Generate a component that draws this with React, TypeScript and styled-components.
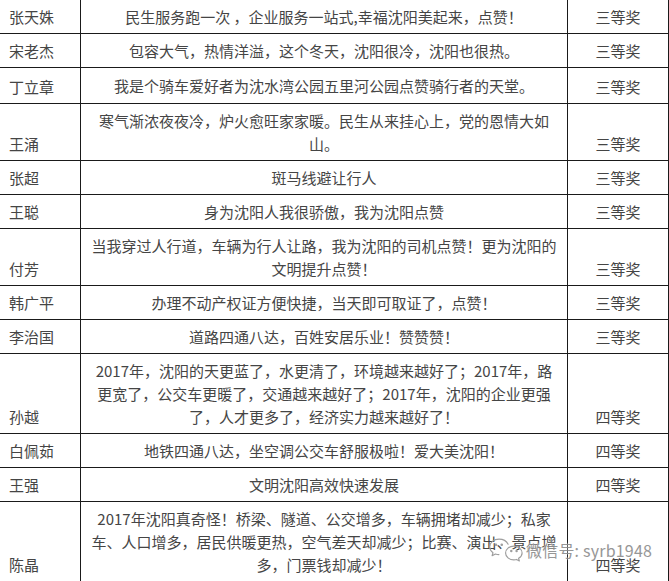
import React from "react";
import styled, { createGlobalStyle } from "styled-components";

interface Entry {
  name: string;
  lines: string[];
  prize: string;
  tall?: boolean;
}

const entries: Entry[] = [
  {
    name: "张天姝",
    lines: ["民生服务跑一次 ，企业服务一站式,幸福沈阳美起来，点赞！"],
    prize: "三等奖",
  },
  {
    name: "宋老杰",
    lines: ["包容大气，热情洋溢，这个冬天，沈阳很冷，沈阳也很热。"],
    prize: "三等奖",
  },
  {
    name: "丁立章",
    lines: ["我是个骑车爱好者为沈水湾公园五里河公园点赞骑行者的天堂。"],
    prize: "三等奖",
    tall: true,
  },
  {
    name: "王涌",
    lines: ["寒气渐浓夜夜冷，炉火愈旺家家暖。民生从来挂心上，党的恩情大如", "山。"],
    prize: "三等奖",
  },
  { name: "张超", lines: ["斑马线避让行人"], prize: "三等奖" },
  { name: "王聪", lines: ["身为沈阳人我很骄傲，我为沈阳点赞"], prize: "三等奖" },
  {
    name: "付芳",
    lines: ["当我穿过人行道，车辆为行人让路，我为沈阳的司机点赞！更为沈阳的", "文明提升点赞！"],
    prize: "三等奖",
  },
  {
    name: "韩广平",
    lines: ["办理不动产权证方便快捷，当天即可取证了，点赞！"],
    prize: "三等奖",
  },
  {
    name: "李治国",
    lines: ["道路四通八达，百姓安居乐业！赞赞赞！"],
    prize: "三等奖",
  },
  {
    name: "孙越",
    lines: [
      "2017年，沈阳的天更蓝了，水更清了，环境越来越好了；2017年，路",
      "更宽了，公交车更暖了，交通越来越好了；2017年，沈阳的企业更强",
      "了，人才更多了，经济实力越来越好了！",
    ],
    prize: "四等奖",
  },
  {
    name: "白佩茹",
    lines: ["地铁四通八达，坐空调公交车舒服极啦！爱大美沈阳！"],
    prize: "四等奖",
  },
  { name: "王强", lines: ["文明沈阳高效快速发展"], prize: "四等奖" },
  {
    name: "陈晶",
    lines: [
      "2017年沈阳真奇怪！桥梁、隧道、公交增多，车辆拥堵却减少；私家",
      "车、人口增多，居民供暖更热，空气差天却减少；比赛、演出、景点增",
      "多，门票钱却减少！",
    ],
    prize: "四等奖",
  },
];

export default function App() {
  return (
    <>
      <GlobalStyle />
      <Page>
        <PrizeTable>
          <colgroup>
            <col style={{ width: 81 }} />
            <col style={{ width: 487 }} />
            <col style={{ width: 101 }} />
          </colgroup>
          <tbody>
            {entries.map((entry) => (
              <Row key={entry.name} $tall={entry.tall}>
                <NameCell>{entry.name}</NameCell>
                <ContentCell>
                  {entry.lines.map((line, i) => (
                    <React.Fragment key={i}>
                      {i > 0 && <br />}
                      {line}
                    </React.Fragment>
                  ))}
                </ContentCell>
                <PrizeCell>{entry.prize}</PrizeCell>
              </Row>
            ))}
          </tbody>
        </PrizeTable>
        <Watermark>
          <WeChatLogo />
          <WatermarkText>微信号: syrb1948</WatermarkText>
        </Watermark>
      </Page>
    </>
  );
}

// the faded two-bubble mark beside the account name
const WeChatLogo: React.FC = () => (
  <svg width="36" height="26" viewBox="0 0 34 24" fill="none">
    <g stroke="#9e9e9e" strokeWidth="1.1" strokeLinecap="round" strokeLinejoin="round">
      <path d="M19 6.5c-1.5-3-5-4.8-8.6-4.8C5.5 1.7 1.6 5 1.6 9c0 2.3 1.2 4.3 3.1 5.6l-0.8 2.8 3.1-1.6c1 .3 2.1.5 3.3.5" />
      <path d="M32.2 14.8c0-3.6-3.5-6.5-7.8-6.5s-7.8 2.9-7.8 6.5 3.5 6.5 7.8 6.5c.9 0 1.8-.1 2.6-.4l2.6 1.4-.7-2.4c2-1.2 3.3-3 3.3-5.1z" />
      <circle cx="7.5" cy="7" r="0.7" fill="#9e9e9e" />
      <circle cx="13" cy="7" r="0.7" fill="#9e9e9e" />
      <circle cx="22" cy="13" r="0.6" fill="#9e9e9e" />
      <circle cx="27" cy="13" r="0.6" fill="#9e9e9e" />
    </g>
  </svg>
);

const GlobalStyle = createGlobalStyle`
  html, body {
    margin: 0;
    padding: 0;
    background: #ffffff;
    overflow: hidden;
  }
`;

const Page = styled.div`
  position: relative;
  width: 669px;
  height: 581px;
  overflow: hidden;
  background: #ffffff;
`;

const PrizeTable = styled.table`
  border-collapse: collapse;
  table-layout: fixed;
  width: 669px;
  margin: -1px 0 0 -1px;
  font-family: "Noto Sans CJK SC", "Microsoft YaHei", sans-serif;
  font-size: 15px;
  line-height: 23px;
  color: #454545;
`;

const Row = styled.tr<{ $tall?: boolean }>`
  height: ${({ $tall }) => ($tall ? "36px" : "auto")};
`;

const Cell = styled.td`
  border: 1px solid #1a1a1a;
  padding: 5px 8px;
  white-space: nowrap;
`;

const NameCell = styled(Cell)`
  text-align: left;
  vertical-align: bottom;
  padding-left: 9px;
`;

const ContentCell = styled(Cell)`
  text-align: center;
  vertical-align: middle;
  padding: 5px 2px;
`;

const PrizeCell = styled(Cell)`
  text-align: center;
  vertical-align: bottom;
  padding-left: 0;
  padding-right: 0;
`;

const Watermark = styled.div`
  position: absolute;
  left: 488px;
  top: 537px;
  display: flex;
  align-items: center;
  gap: 2px;
  pointer-events: none;
`;

const WatermarkText = styled.span`
  font-family: "Noto Sans CJK SC", sans-serif;
  font-size: 16px;
  line-height: 20px;
  color: #8c8c8c;
  letter-spacing: 0.2px;
  text-shadow: 0 0 1px #ffffff, 0 0 2px #ffffff;
  opacity: 0.9;
`;
